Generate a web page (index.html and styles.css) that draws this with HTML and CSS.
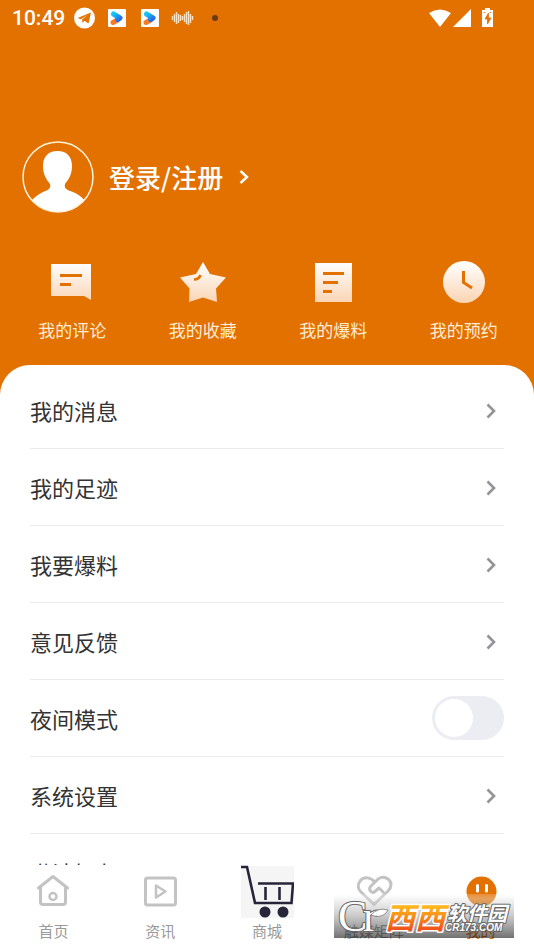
FILE: index.html
```html
<!DOCTYPE html>
<html lang="zh-CN">
<head>
<meta charset="utf-8">
<meta name="viewport" content="width=device-width, initial-scale=1">
<title>我的</title>
<link rel="stylesheet" href="styles.css">
</head>
<body>
<div class="app">
  <header class="hero">
    <div class="status">
      <span class="status-time">10:49</span>
      <svg class="status-left" width="148" height="22" viewBox="0 0 148 22" aria-hidden="true">
        <defs>
          <linearGradient id="blue" x1="0" y1="0" x2="1" y2="1"><stop offset="0" stop-color="#16c8f5"/><stop offset="1" stop-color="#2468ee"/></linearGradient>
          <g id="player">
            <rect width="18" height="18" rx="1" fill="#fff"/>
            <path d="M5 13.5 9.5 11" stroke="#fb7a21" stroke-width="5" stroke-linecap="round"/>
            <path d="M5.5 5 12 9 9.5 10.5" fill="none" stroke="url(#blue)" stroke-width="5" stroke-linecap="round" stroke-linejoin="round"/>
          </g>
        </defs>
        <circle cx="10.500" cy="11" r="10.500" fill="#fff"/>
        <path d="M3.500 11 17 5.500 14.500 16.500 10.500 13.700 8.500 15.700 8 12.500 14 7.800 6.800 12.200Z" fill="#e37100"/>
        <use href="#player" x="34" y="2"/>
        <use href="#player" x="67" y="2"/>
        <path d="M98.500 9v4M100.500 7v8M102.500 5v12M104.500 7v9M106.500 8v6M108.500 9v4M110.500 7v8M112.500 5v12M114.500 4v14M116.500 7v9M118.500 9v4" stroke="#ffe3c4" stroke-width="1.400"/>
        <circle cx="141" cy="11" r="3" fill="#693b12"/>
      </svg>
      <svg class="status-right" width="68" height="22" viewBox="0 0 68 22" aria-hidden="true">
        <path d="M1 6Q12 -1 23 6L12 20Z" fill="#fff"/>
        <path d="M43 2V20H25Z" fill="#fff"/>
        <path d="M57 1h5v2h3v17H54V3h3Z" fill="#fff"/>
        <path d="M60.500 6 57 12h2.500v5l3.500-6h-2.500ZM55.500 5.500h2M61.500 5.500h2" fill="#e37100" stroke="#e37100" stroke-width=".8"/>
      </svg>
    </div>

    <a class="profile" href="#login">
      <svg width="72" height="72" viewBox="0 0 72 72" aria-hidden="true">
        <defs><clipPath id="face"><circle cx="36" cy="36" r="35"/></clipPath></defs>
        <path clip-path="url(#face)" d="M35.500 10C26 10 21 16 21 25C21 33 24 38 28 43C29 47 27 49 21 51C15 54 12 57 9 60V72H63V60C60 56 56 53 51 51C44 49 42 47 43 43C47 38 50 33 50 25C50 16 45 10 35.500 10Z" fill="#fff"/>
        <circle cx="36" cy="36" r="35" fill="none" stroke="#fff3dc" stroke-width="1.500"/>
      </svg>
      <span class="profile-name">登录/注册</span>
      <svg width="10" height="16" viewBox="0 0 10 16" aria-hidden="true"><path d="M1.500 2 8 8 1.500 14" fill="none" stroke="#fff" stroke-width="2.400"/></svg>
    </a>

    <nav class="quick" aria-label="快捷入口">
      <a href="#comments">
        <svg width="46" height="44" viewBox="0 0 46 44" aria-hidden="true">
          <defs><linearGradient id="cream" gradientUnits="userSpaceOnUse" x1="0" y1="2" x2="0" y2="43"><stop offset="0" stop-color="#fff"/><stop offset="1" stop-color="#fad4b3"/></linearGradient></defs>
          <path d="M2 4H42V40L35 36H2Z" fill="url(#cream)"/><path d="M11 15.500H33M11 24.500H22" stroke="#e37100" stroke-width="3"/>
        </svg>
        <span>我的评论</span>
      </a>
      <a href="#favorites">
        <svg width="46" height="44" viewBox="0 0 46 44" aria-hidden="true">
          <path d="M23 2 30 14 46 17.500 36 28.500 37 42 23 37.500 9 42 9.500 28.500 0 17.500 16 14Z" fill="url(#cream)"/><path d="M14 19.500Q19 19.500 20.500 15" fill="none" stroke="#e37100" stroke-width="2.600"/>
        </svg>
        <span>我的收藏</span>
      </a>
      <a href="#tips">
        <svg width="46" height="44" viewBox="0 0 46 44" aria-hidden="true">
          <path d="M5 3H42V42H5Z" fill="url(#cream)"/><path d="M13 13.500H34M13 22.500H28M13 31.500H22" stroke="#e37100" stroke-width="3"/>
        </svg>
        <span>我的爆料</span>
      </a>
      <a href="#bookings">
        <svg width="46" height="44" viewBox="0 0 46 44" aria-hidden="true">
          <circle cx="23" cy="22" r="21" fill="url(#cream)"/><path d="M22.500 11V22.500L31 28" fill="none" stroke="#e37100" stroke-width="3"/>
        </svg>
        <span>我的预约</span>
      </a>
    </nav>
  </header>

  <main class="sheet">
    <a class="row" href="#messages">我的消息<svg class="chevron" viewBox="0 0 10 16" aria-hidden="true"><path d="M1.500 1.500 8 8 1.500 14.500"/></svg></a>
    <a class="row" href="#history">我的足迹<svg class="chevron" viewBox="0 0 10 16" aria-hidden="true"><path d="M1.500 1.500 8 8 1.500 14.500"/></svg></a>
    <a class="row" href="#report">我要爆料<svg class="chevron" viewBox="0 0 10 16" aria-hidden="true"><path d="M1.500 1.500 8 8 1.500 14.500"/></svg></a>
    <a class="row" href="#feedback">意见反馈<svg class="chevron" viewBox="0 0 10 16" aria-hidden="true"><path d="M1.500 1.500 8 8 1.500 14.500"/></svg></a>
    <div class="row"><label for="night">夜间模式</label><input class="switch" id="night" type="checkbox" role="switch"></div>
    <a class="row" href="#settings">系统设置<svg class="chevron" viewBox="0 0 10 16" aria-hidden="true"><path d="M1.500 1.500 8 8 1.500 14.500"/></svg></a>
    <a class="row" href="#invite">邀请好友<svg class="chevron" viewBox="0 0 10 16" aria-hidden="true"><path d="M1.500 1.500 8 8 1.500 14.500"/></svg></a>
  </main>

  <nav class="tabs" aria-label="主导航">
    <a href="#home">
      <svg width="54" height="54" viewBox="0 0 54 54" fill="none" stroke="#c3c3c3" stroke-width="3" stroke-linecap="round" stroke-linejoin="round" aria-hidden="true"><path d="M12.500 23 27 11.500 41.500 23M14.500 22V37Q14.500 39.500 17 39.500H37Q39.500 39.500 39.500 37V22"/><circle cx="27" cy="31.500" r="3.500" stroke-width="2.500"/></svg>
      <span>首页</span>
    </a>
    <a href="#news">
      <svg width="54" height="54" viewBox="0 0 54 54" fill="none" stroke="#c3c3c3" stroke-width="3" stroke-linejoin="round" aria-hidden="true"><rect x="12.500" y="13" width="30" height="27" rx="2"/><path d="M23 20.500V32.500L32.500 26.500Z" stroke-width="2.500"/></svg>
      <span>资讯</span>
    </a>
    <a href="#mall">
      <svg width="54" height="54" viewBox="0 0 54 54" aria-hidden="true"><path d="M1 1H54V53H1Z" fill="#f5f5f5"/><path d="M1 2H7L15 38H51.500L53 18.500H18M25.500 22V35M39.500 22V35" fill="none" stroke="#27253a" stroke-width="2.600"/><circle cx="25" cy="47" r="5.500" fill="#27253a"/><circle cx="43" cy="47" r="5.500" fill="#27253a"/></svg>
      <span>商城</span>
    </a>
    <a href="#matrix">
      <svg width="54" height="54" viewBox="0 0 54 54" fill="none" stroke="#c3c3c3" stroke-width="3" stroke-linecap="round" stroke-linejoin="round" aria-hidden="true"><path d="M27.500 17C24 12 17 11.500 13.500 15.500C10 19.500 11 24 14 27L27 39.500L41 26C45 22 45 17 41 14C37 11 32 12 28 17L23.500 21.500C21 25 25 29 28 26.500L32 23L36 27"/></svg>
      <span>触媒矩阵</span>
    </a>
    <a class="active" href="#me" aria-current="page">
      <svg width="54" height="54" viewBox="0 0 54 54" aria-hidden="true"><circle cx="27.500" cy="26.500" r="15" fill="#e37100"/><path d="M23.500 20.500V26M32.500 20.500V26" stroke="#fff" stroke-width="3" stroke-linecap="round"/></svg>
      <span>我的</span>
    </a>
  </nav>

  <svg class="watermark" width="180" height="44" viewBox="0 0 180 44" role="img" aria-label="西西软件园 CR173.COM">
    <defs>
      <linearGradient id="shade" x1="0" y1="0" x2="0" y2="1"><stop offset="0" stop-color="#fff" stop-opacity=".2"/><stop offset=".1" stop-color="#e8e8e8" stop-opacity=".4"/><stop offset=".5" stop-color="#888" stop-opacity=".45"/><stop offset="1" stop-color="#000" stop-opacity=".56"/></linearGradient>
      <linearGradient id="flame" x1="0" y1="0" x2="0" y2="1"><stop offset=".3" stop-color="#ffb51c"/><stop offset=".85" stop-color="#ec4b18"/></linearGradient>
    </defs>
    <rect width="180" height="44" fill="url(#shade)"/>
    <text class="wm-script" x="4" y="37">C</text>
    <text class="wm-script wm-r" x="29" y="37">r</text>
    <path d="M37 21Q44 13 54 16Q50 24 40 22Z" fill="#fff" stroke="#777" stroke-width=".8"/>
    <text class="wm-xixi" x="51" y="35">西西</text>
    <text class="wm-soft" x="113" y="27">软件园</text>
    <text class="wm-url" x="111" y="37">CR173.COM</text>
  </svg>
</div>
</body>
</html>
```
FILE: styles.css
```css
* {
  box-sizing: border-box;
}

body {
  margin: 0;
  background: #fff;
  color: #333;
  font-family: "Noto Sans CJK SC", sans-serif;
}

a {
  color: inherit;
  text-decoration: none;
}

.app {
  position: relative;
  display: flex;
  flex-direction: column;
  height: 100vh;
  background: #e37100;
}

.hero {
  flex: none;
  padding-bottom: 23px;
  color: #fff;
}

.status {
  display: flex;
  align-items: center;
  height: 36px;
  padding: 0 38px 0 12px;
}

.status-time {
  font: 500 21px/24px Roboto, sans-serif;
}

.status-left {
  margin-left: 9px;
}

.status-right {
  margin-left: auto;
}

.profile {
  display: flex;
  align-items: center;
  margin-top: 105px;
  padding-left: 22px;
}

.profile-name {
  margin: 0 16px 0 15px;
  font-size: 26px;
  font-weight: 500;
  line-height: 36px;
}

.quick {
  display: grid;
  grid-template-columns: repeat(4, 1fr);
  margin-top: 47px;
  padding: 0 5px 0 7px;
}

.quick a {
  display: flex;
  flex-direction: column;
  align-items: center;
  gap: 14px;
  color: #ffecd6;
  font-size: 17px;
  line-height: 24px;
}

.sheet {
  flex: 1;
  min-height: 0;
  overflow-y: auto;
  scrollbar-width: none;
  padding: 7px 30px 0;
  background: #fff;
  border-radius: 30px 30px 0 0;
}

.row {
  display: flex;
  align-items: center;
  justify-content: space-between;
  height: 77px;
  border-bottom: 1px solid #ebebed;
  font-size: 22px;
}

.chevron {
  width: 10px;
  height: 16px;
  margin: 2px 8px 0 0;
  fill: none;
  stroke: #939399;
  stroke-width: 2.6;
}

.switch {
  appearance: none;
  width: 72px;
  height: 44px;
  margin: 0;
  padding: 3px;
  border-radius: 22px;
  background: #ecedf2;
}

.switch::before {
  content: "";
  display: block;
  width: 38px;
  height: 38px;
  border-radius: 50%;
  background: #fff;
}

.switch:checked {
  background: #e37100;
}

.switch:checked::before {
  margin-left: auto;
}

.tabs {
  flex: none;
  display: grid;
  grid-template-columns: repeat(5, 1fr);
  padding-bottom: 6px;
  background: #fff;
}

.tabs a {
  display: flex;
  flex-direction: column;
  align-items: center;
  gap: 1px;
  color: #999;
  font-size: 15px;
  line-height: 22px;
}

.tabs .active {
  color: #e37100;
}

.watermark {
  position: absolute;
  right: 20px;
  bottom: 10px;
  pointer-events: none;
}

.watermark text {
  paint-order: stroke;
  stroke-linejoin: round;
  fill: #fff;
  stroke: #666;
}

.wm-script {
  font: 44px "Liberation Serif", serif;
  stroke-width: 2;
}

.watermark .wm-xixi {
  font: italic 700 30px "Noto Sans CJK SC", sans-serif;
  fill: url(#flame);
  stroke: #fff;
  stroke-width: 3;
}

.wm-soft {
  font: italic 700 20px "Noto Sans CJK SC", sans-serif;
  stroke-width: 2;
}

.wm-url {
  font: italic 700 10px "Liberation Sans", sans-serif;
  stroke-width: 2;
}
```
